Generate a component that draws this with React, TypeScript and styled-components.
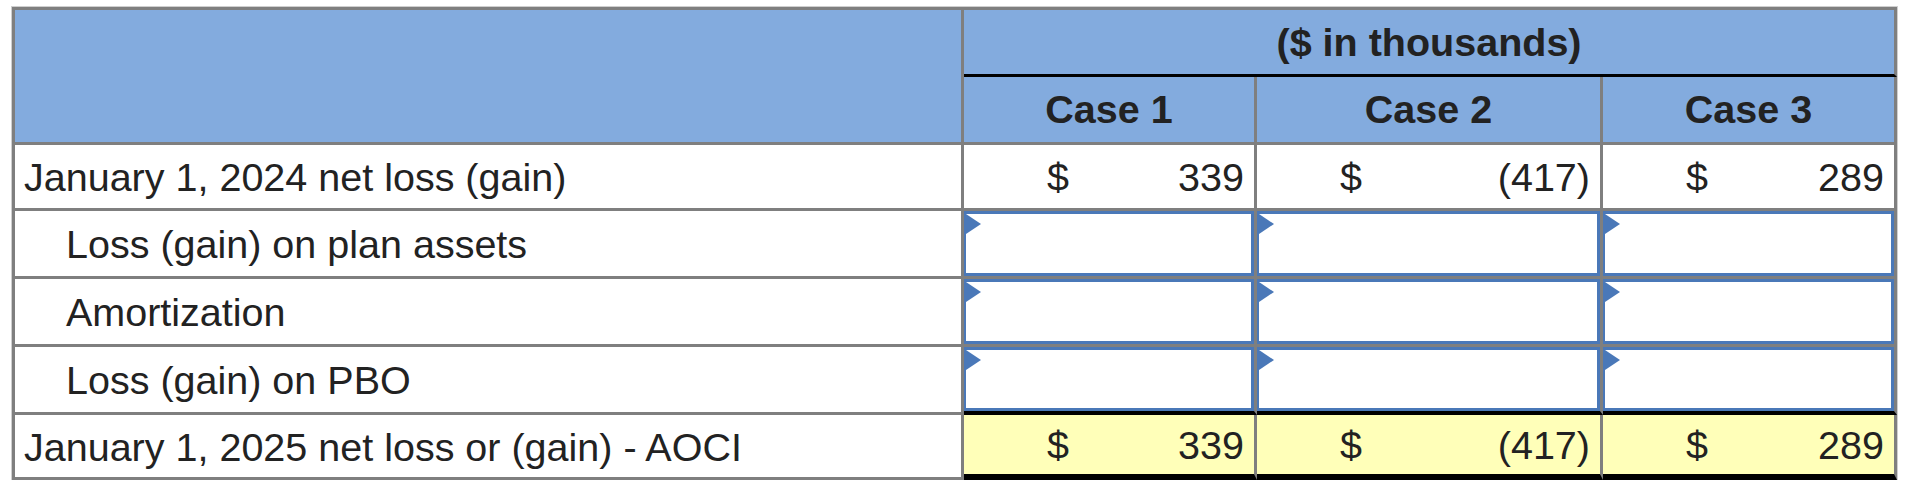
import React from 'react';
import styled, { createGlobalStyle } from 'styled-components';

const GRAY = '#7f7f7f';
const BLUE = '#4a78b8';

const GlobalStyle = createGlobalStyle`
  body {
    margin: 0;
    background: #fff;
  }
`;

// 표 전체
const Sheet = styled.table`
  margin: 7px 0 0 12px;
  width: 1885px;
  table-layout: fixed;
  border-collapse: separate;
  border-spacing: 0;
  border-top: 3px solid ${GRAY};
  border-left: 3px solid ${GRAY};
  box-shadow: 0 0 0 1px #cfcfcf;
  font-family: 'Liberation Sans', Arial, sans-serif;
  font-size: 39.5px;
  color: #222;
`;

const Row = styled.tr<{ $h: number }>`
  height: ${(p) => p.$h}px;
`;

// 머리글 칸
const HeadCell = styled.th<{ $dark?: boolean }>`
  background: #83abde;
  font-weight: bold;
  text-align: center;
  padding: 0;
  border-right: 3px solid ${GRAY};
  border-bottom: 3px solid ${(p) => (p.$dark ? '#000' : GRAY)};
`;

// 왼쪽 항목 이름
const LabelCell = styled.td<{ $indent?: boolean }>`
  padding: 2px 0 0 ${(p) => (p.$indent ? 51 : 9)}px;
  white-space: nowrap;
  border-right: 3px solid ${GRAY};
  border-bottom: 3px solid ${GRAY};
`;

// 금액 칸
const AmountCell = styled.td<{ $total?: boolean }>`
  padding: 0;
  background: ${(p) => (p.$total ? '#ffffb9' : '#fff')};
  border-right: 3px solid ${GRAY};
  border-bottom: ${(p) => (p.$total ? '6px solid #000' : `3px solid ${GRAY}`)};
`;

const Amount = styled.div`
  display: flex;
  justify-content: space-between;
  padding: 2px 10px 0 83px;
`;

// 입력 칸
const InputCell = styled.td<{ $last?: boolean }>`
  padding: 0;
  border-right: 3px solid ${GRAY};
  border-bottom: ${(p) => (p.$last ? '4px solid #000' : `3px solid ${GRAY}`)};
`;

const InputBox = styled.div<{ $h: number }>`
  position: relative;
  box-sizing: border-box;
  width: 100%;
  height: ${(p) => p.$h}px;
  background: #fff;
  border: 3px solid ${BLUE};
  border-left-width: 2px;

  &::before {
    content: '';
    position: absolute;
    left: 0;
    top: 0;
    border-style: solid;
    border-width: 10px 0 10px 15px;
    border-color: transparent transparent transparent ${BLUE};
  }
`;

const cases = [
  { name: 'Case 1', start: '339' },
  { name: 'Case 2', start: '(417)' },
  { name: 'Case 3', start: '289' },
];

const steps = ['Loss (gain) on plan assets', 'Amortization', 'Loss (gain) on PBO'];

const App = () => (
  <>
    <GlobalStyle />
    <Sheet>
      <colgroup>
        <col style={{ width: 949 }} />
        <col style={{ width: 293 }} />
        <col style={{ width: 346 }} />
        <col style={{ width: 294 }} />
      </colgroup>
      <thead>
        <Row $h={67}>
          <HeadCell rowSpan={2} />
          <HeadCell colSpan={3} $dark>
            ($ in thousands)
          </HeadCell>
        </Row>
        <Row $h={68}>
          {cases.map((c) => (
            <HeadCell key={c.name}>{c.name}</HeadCell>
          ))}
        </Row>
      </thead>
      <tbody>
        <Row $h={66}>
          <LabelCell>January 1, 2024 net loss (gain)</LabelCell>
          {cases.map((c) => (
            <AmountCell key={c.name}>
              <Amount>
                <span>$</span>
                <span>{c.start}</span>
              </Amount>
            </AmountCell>
          ))}
        </Row>
        {steps.map((s, i) => {
          const last = i === steps.length - 1;
          return (
            <Row $h={68} key={s}>
              <LabelCell $indent>{s}</LabelCell>
              {cases.map((c) => (
                <InputCell key={c.name} $last={last}>
                  <InputBox $h={last ? 64 : 65} />
                </InputCell>
              ))}
            </Row>
          );
        })}
        <Row $h={65}>
          <LabelCell>January 1, 2025 net loss or (gain) - AOCI</LabelCell>
          {cases.map((c) => (
            <AmountCell key={c.name} $total>
              <Amount>
                <span>$</span>
                <span>{c.start}</span>
              </Amount>
            </AmountCell>
          ))}
        </Row>
      </tbody>
    </Sheet>
  </>
);

export default App;
